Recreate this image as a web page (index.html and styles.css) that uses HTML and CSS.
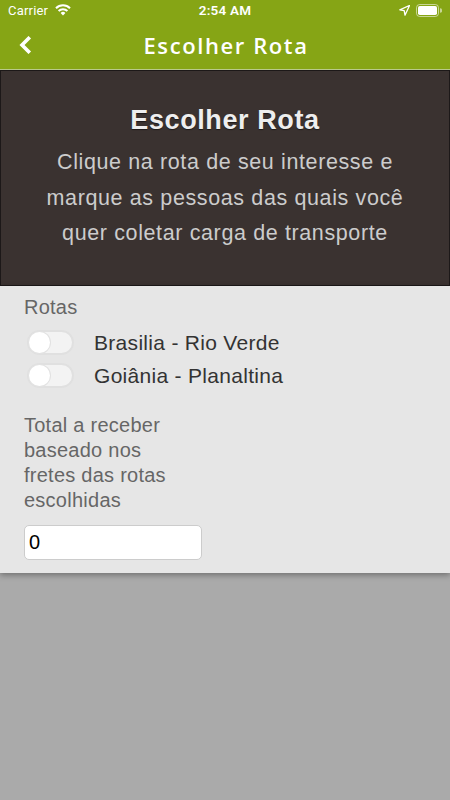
FILE: index.html
```html
<!DOCTYPE html>
<html lang="pt">
<head>
<meta charset="utf-8">
<title>Escolher Rota</title>
<link rel="stylesheet" href="styles.css">
</head>
<body>
<header class="topbar">
  <div class="status">
    <div class="status-left">
      <span class="carrier">Carrier</span>
      <svg class="wifi" width="16" height="12" viewBox="0 0 16 12">
        <path d="M8 11.5 L5.6 9 A3.4 3.4 0 0 1 10.4 9 Z" fill="#fff"/>
        <path d="M3.6 7 A6.2 6.2 0 0 1 12.4 7" stroke="#fff" stroke-width="2" fill="none"/>
        <path d="M1 4.3 A9.8 9.8 0 0 1 15 4.3" stroke="#fff" stroke-width="2" fill="none"/>
      </svg>
    </div>
    <span class="time">2:54 AM</span>
    <div class="status-right">
      <svg class="loc" width="11" height="11" viewBox="0 0 11 11">
        <path d="M10.5 0.5 L0.8 4.8 L5.2 5.6 L6 10.2 Z" fill="none" stroke="#fff" stroke-width="1.3" stroke-linejoin="round"/>
      </svg>
      <svg class="battery" width="26" height="13" viewBox="0 0 26 13">
        <rect x="0.5" y="0.5" width="22" height="12" rx="3.2" fill="none" stroke="#fff" stroke-opacity="0.55"/>
        <rect x="2" y="2" width="19" height="9" rx="1.8" fill="#fff"/>
        <path d="M24 4.3 A2 2 0 0 1 24 8.7 Z" fill="#fff" fill-opacity="0.55"/>
      </svg>
    </div>
  </div>
  <nav class="navbar">
    <svg class="back" width="14" height="18" viewBox="0 0 14 18">
      <path d="M10.5 2.5 L4 9 L10.5 15.5" fill="none" stroke="#fff" stroke-width="3.6" stroke-linecap="square"/>
    </svg>
    <h1 class="nav-title">Escolher Rota</h1>
  </nav>
</header>

<section class="hero">
  <h2 class="hero-title">Escolher Rota</h2>
  <p class="hero-text">Clique na rota de seu interesse e marque as pessoas das quais você quer coletar carga de transporte</p>
</section>

<main class="card">
  <div class="label">Rotas</div>
  <ul class="routes">
    <li class="route"><span class="toggle"><span class="knob"></span></span><span class="route-name">Brasilia - Rio Verde</span></li>
    <li class="route"><span class="toggle"><span class="knob"></span></span><span class="route-name">Goiânia - Planaltina</span></li>
  </ul>
  <div class="total-label">Total a receber baseado nos fretes das rotas escolhidas</div>
  <div class="input">0</div>
</main>
</body>
</html>
```
FILE: styles.css
```css
* { box-sizing: border-box; }
html, body { margin: 0; padding: 0; }
body {
  width: 450px;
  height: 800px;
  background: #aaaaaa;
  font-family: "Liberation Sans", Arial, sans-serif;
  overflow: hidden;
}
.topbar {
  background: #86a515;
  border-bottom: 1px solid #b9c98a;
  height: 70px;
}
.status {
  height: 20px;
  display: flex;
  align-items: center;
  justify-content: space-between;
  padding: 0 8px;
  color: #fff;
  font-size: 13px;
  position: relative;
}
.status-left { display: flex; align-items: center; gap: 7px; }
.carrier { font-family: "Roboto", "Liberation Sans", sans-serif; letter-spacing: 0.2px; }
.time {
  position: absolute;
  left: 0; right: 0;
  text-align: center;
  font-weight: 600;
  font-family: "Roboto", "Liberation Sans", sans-serif;
  font-size: 13.5px;
  letter-spacing: 0.2px;
  pointer-events: none;
}
.status-right { display: flex; align-items: center; gap: 6px; }
.navbar {
  height: 49px;
  display: flex;
  align-items: center;
  justify-content: center;
  position: relative;
}
.back { position: absolute; left: 18px; top: 16px; }
.nav-title {
  margin: 0;
  color: #fff;
  font-family: "Open Sans", sans-serif;
  font-weight: 600;
  font-size: 22px;
  letter-spacing: 1.6px;
  padding-left: 2px;
}
.hero {
  background: #3a3230;
  border: 1px solid #1c1818;
  height: 216px;
  padding-top: 33px;
  text-align: center;
}
.hero-title {
  margin: 0;
  color: #eeeeee;
  font-size: 27px;
  line-height: 32px;
  font-weight: bold;
  letter-spacing: 0.6px;
  text-shadow: 0 1px 1px rgba(0,0,0,0.5);
}
.hero-text {
  margin: 9px auto 0;
  width: 400px;
  color: #cccccc;
  font-size: 21.5px;
  line-height: 35.5px;
  letter-spacing: 0.62px;
}
.card {
  background: #e6e6e6;
  padding: 9px 24px 13px;
  box-shadow: 0 2px 6px rgba(0,0,0,0.35);
}
.label, .total-label {
  color: #666666;
  font-size: 20px;
  line-height: 25px;
  letter-spacing: 0.25px;
}
.routes {
  list-style: none;
  margin: 6px 0 0;
  padding: 0;
}
.route {
  display: flex;
  align-items: center;
  height: 33px;
  padding-left: 3px;
  gap: 20px;
}
.toggle {
  width: 47px;
  height: 25px;
  border-radius: 13px;
  background: #f3f3f3;
  border: 2px solid #e0e0e0;
  position: relative;
  flex: none;
}
.knob {
  position: absolute;
  left: 0; top: 0;
  width: 21px; height: 21px;
  border-radius: 50%;
  background: #fff;
  box-shadow: 0 0 0 1px #e2e2e2;
}
.route-name {
  color: #333333;
  font-size: 21px;
  letter-spacing: 0.3px;
}
.total-label {
  margin-top: 21px;
  width: 170px;
}
.input {
  margin-top: 12px;
  width: 178px;
  height: 35px;
  background: #fff;
  border: 1px solid #cccccc;
  border-radius: 5px;
  padding-left: 4px;
  font-size: 20px;
  line-height: 33px;
  color: #000;
}
```
